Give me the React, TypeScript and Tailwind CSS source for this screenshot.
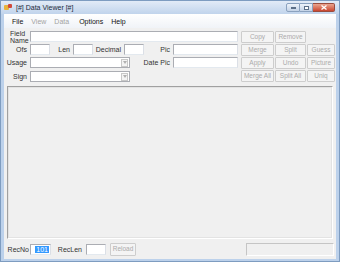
import React from 'react';

const font = { fontFamily: '"Liberation Sans", Arial, sans-serif' };

const TextBox: React.FC<{ w: string; children?: React.ReactNode }> = ({ w, children }) => (
    <div className={`${w} h-[11px] bg-white border border-[#abadb3] border-b-[#e3e9ef] border-r-[#dbdfe6] flex items-center`}>
        {children}
    </div>
);

const Combo: React.FC = () => (
    <div className="w-[100px] h-[11px] bg-white border border-[#abadb3] flex items-center justify-end pr-[1px]">
        <div className="w-[7px] h-[8px] border border-[#c8c8c8] bg-[#f4f4f4] flex items-center justify-center">
            <svg width="4" height="3" viewBox="0 0 4 3"><path d="M0 0h4L2 3z" fill="#b0b0b0" /></svg>
        </div>
    </div>
);

const Btn: React.FC<{ label: string; w?: string }> = ({ label, w = '' }) => (
    <div className={`${w} h-[12px] bg-[#f4f4f4] border border-[#cdcdcd] rounded-[1px] flex items-center justify-center text-[6.5px] text-[#ababab]`}>
        {label}
    </div>
);

const Label: React.FC<{ w: string; children: React.ReactNode }> = ({ w, children }) => (
    <div className={`${w} text-right pr-[3px] text-[7px] text-[#333] leading-none whitespace-nowrap`}>{children}</div>
);

const App: React.FC = () => {
    return (
        <div className="w-[340px] h-[262px] bg-[#bcd1eb] flex flex-col overflow-hidden border border-[#7e9cc0]" style={font}>
            {/* title bar */}
            <div className="h-[13px] flex items-center pl-[3px] pr-[4px] bg-gradient-to-b from-[#e2ebf7] to-[#c1d4ec]">
                <div className="w-[8px] h-[7px] relative mr-[4px]">
                    <div className="absolute left-0 top-[1px] w-[5px] h-[5px] bg-[#e8b33c] rounded-[1px]" />
                    <div className="absolute right-0 top-0 w-[4px] h-[4px] bg-[#d0483a] rounded-[1px]" />
                </div>
                <div className="text-[7px] text-[#1e2b3c] leading-none">[#] Data Viewer [#]</div>
                <div className="flex-1" />
                <div className="flex">
                    <div className="w-[14px] h-[9px] border border-[#8ba2bf] rounded-l-[2px] bg-gradient-to-b from-[#eef3fa] to-[#c3d2e6] flex items-center justify-center">
                        <div className="w-[5px] h-[2px] border border-[#5c6f88] bg-white" />
                    </div>
                    <div className="w-[13px] h-[9px] border border-l-0 border-[#8ba2bf] bg-gradient-to-b from-[#eef3fa] to-[#c3d2e6] flex items-center justify-center">
                        <div className="w-[5px] h-[4px] border border-[#5c6f88] bg-white" />
                    </div>
                    <div className="w-[22px] h-[9px] border border-l-0 border-[#9a4c3e] rounded-r-[2px] bg-gradient-to-b from-[#e9a48f] to-[#c9442f] flex items-center justify-center">
                        <svg width="6" height="5" viewBox="0 0 6 5"><path d="M0.5 0.5l5 4M5.5 0.5l-5 4" stroke="#fff" strokeWidth="1.3" /></svg>
                    </div>
                </div>
            </div>

            {/* client */}
            <div className="flex-1 mx-[3px] mb-[2px] bg-[#f0f0f0] flex flex-col">
                {/* menu */}
                <div className="h-[14px] flex items-center pl-[8px] gap-[8px] bg-gradient-to-b from-[#ffffff] to-[#f0f3f8] text-[7px] leading-none">
                    <span className="text-[#111]">File</span>
                    <span className="text-[#a3a3a3]">View</span>
                    <span className="text-[#a3a3a3]">Data</span>
                    <span className="text-[#111] ml-[2px]">Options</span>
                    <span className="text-[#111]">Help</span>
                </div>

                {/* form + buttons */}
                <div className="flex mt-[3px]">
                    <div className="w-[236px] flex flex-col gap-[2px]">
                        <div className="h-[11px] flex items-center">
                            <div className="w-[26px] pl-[6px] text-[7px] leading-[7px] text-[#333]">Field<br />Name</div>
                            <TextBox w="w-[208px]" />
                        </div>
                        <div className="h-[11px] flex items-center">
                            <Label w="w-[26px]">Ofs</Label>
                            <TextBox w="w-[20px]" />
                            <Label w="w-[23px]">Len</Label>
                            <TextBox w="w-[20px]" />
                            <Label w="w-[31px]">Decimal</Label>
                            <TextBox w="w-[20px]" />
                            <Label w="w-[29px]">Pic</Label>
                            <TextBox w="w-[65px]" />
                        </div>
                        <div className="h-[11px] flex items-center">
                            <Label w="w-[26px]">Usage</Label>
                            <Combo />
                            <Label w="w-[43px]">Date Pic</Label>
                            <TextBox w="w-[65px]" />
                        </div>
                        <div className="h-[11px] flex items-center mt-[1px]">
                            <Label w="w-[26px]">Sign</Label>
                            <Combo />
                        </div>
                    </div>
                    <div className="grid grid-cols-[33px_31px_28px] gap-x-[1px] gap-y-[1px] ml-[1px]">
                        <Btn label="Copy" />
                        <Btn label="Remove" />
                        <div />
                        <Btn label="Merge" />
                        <Btn label="Split" />
                        <Btn label="Guess" />
                        <Btn label="Apply" />
                        <Btn label="Undo" />
                        <Btn label="Picture" />
                        <Btn label="Merge All" />
                        <Btn label="Split All" />
                        <Btn label="Uniq" />
                    </div>
                </div>

                {/* main panel */}
                <div className="flex-1 mx-[3px] mt-[4px] border border-[#a0a0a0] border-b-white border-r-white">
                    <div className="w-full h-full border border-[#e3e3e3] bg-[#f0f0f0]" />
                </div>

                {/* bottom bar */}
                <div className="h-[20px] flex items-center">
                    <div className="w-[26px] text-right pr-[1px] text-[7px] text-[#333] leading-none">RecNo</div>
                    <TextBox w="w-[21px]">
                        <div className="ml-auto mr-[1px] bg-[#3399ff] text-white text-[7px] leading-none px-[1px]">101</div>
                    </TextBox>
                    <div className="w-[35px] text-right pr-[4px] text-[7px] text-[#333] leading-none">RecLen</div>
                    <TextBox w="w-[20px]" />
                    <Btn label="Reload" w="w-[26px] ml-[4px] h-[13px]" />
                    <div className="flex-1" />
                    <div className="w-[88px] h-[13px] mr-[2px] border border-[#c5c5c5] border-b-white border-r-white" />
                </div>
            </div>
        </div>
    );
};

export default App;
